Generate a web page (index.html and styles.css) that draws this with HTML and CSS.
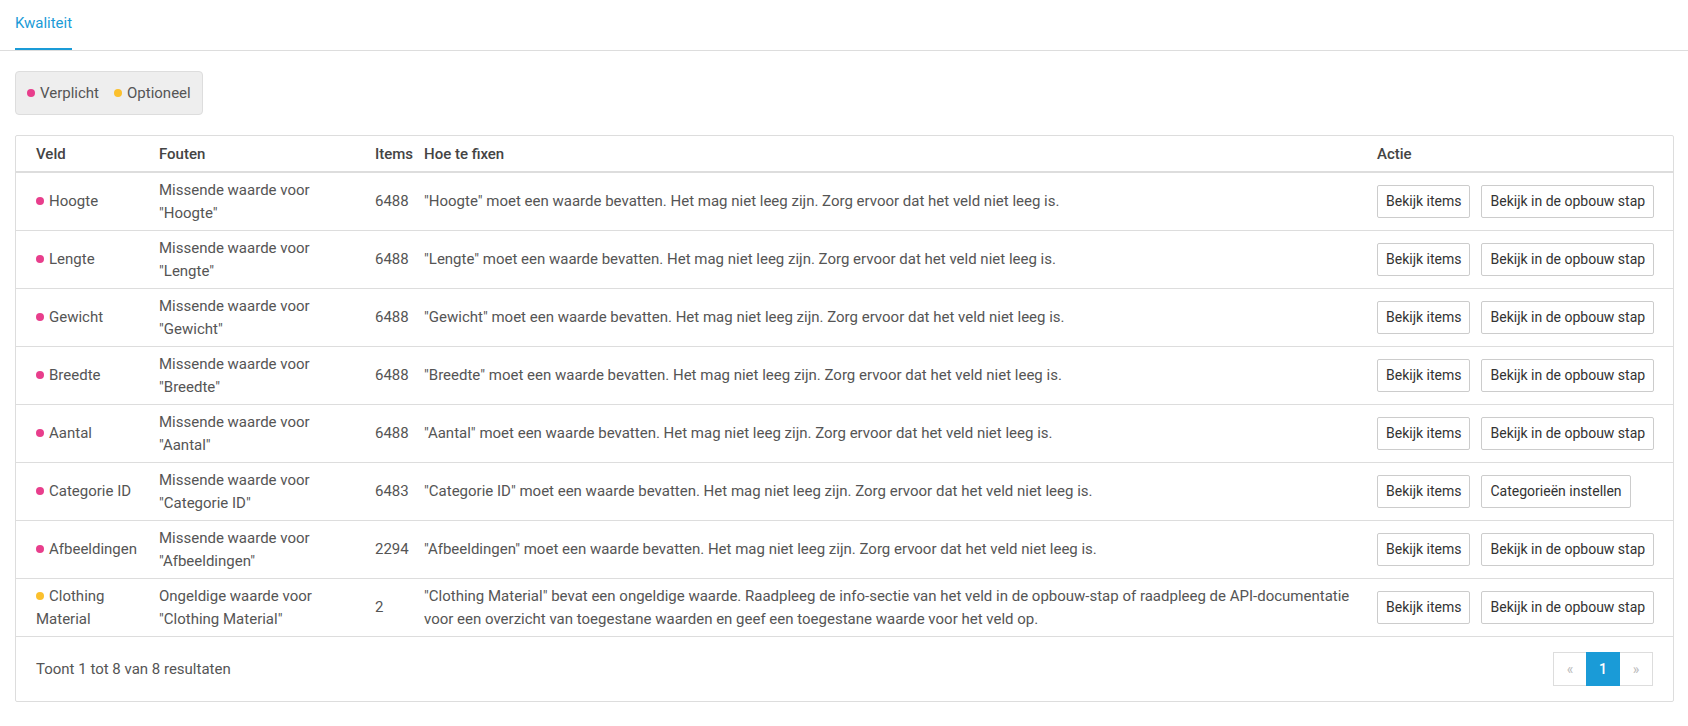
FILE: index.html
```html
<!DOCTYPE html>
<html>
<head>
  <meta charset="utf-8">
  <title>Kwaliteit</title>
  <link rel="stylesheet" href="styles.css">
</head>
<body>

<div class="tabs">
  <a class="tab active" href="#">Kwaliteit</a>
</div>

<div class="page">

  <div class="legend">
    <span class="dot required"></span>Verplicht
    <span class="dot optional second"></span>Optioneel
  </div>

  <div class="panel">
    <table class="quality">
      <colgroup>
        <col class="c-field">
        <col class="c-error">
        <col class="c-items">
        <col class="c-fix">
        <col class="c-action">
      </colgroup>
      <thead>
        <tr>
          <th>Veld</th>
          <th>Fouten</th>
          <th>Items</th>
          <th>Hoe te fixen</th>
          <th>Actie</th>
        </tr>
      </thead>
      <tbody>
        <tr>
          <td><span class="dot required"></span>Hoogte</td>
          <td class="error">Missende waarde voor "Hoogte"</td>
          <td>6488</td>
          <td>"Hoogte" moet een waarde bevatten. Het mag niet leeg zijn. Zorg ervoor dat het veld niet leeg is.</td>
          <td><div class="actions"><button>Bekijk items</button><button>Bekijk in de opbouw stap</button></div></td>
        </tr>
        <tr>
          <td><span class="dot required"></span>Lengte</td>
          <td class="error">Missende waarde voor "Lengte"</td>
          <td>6488</td>
          <td>"Lengte" moet een waarde bevatten. Het mag niet leeg zijn. Zorg ervoor dat het veld niet leeg is.</td>
          <td><div class="actions"><button>Bekijk items</button><button>Bekijk in de opbouw stap</button></div></td>
        </tr>
        <tr>
          <td><span class="dot required"></span>Gewicht</td>
          <td class="error">Missende waarde voor "Gewicht"</td>
          <td>6488</td>
          <td>"Gewicht" moet een waarde bevatten. Het mag niet leeg zijn. Zorg ervoor dat het veld niet leeg is.</td>
          <td><div class="actions"><button>Bekijk items</button><button>Bekijk in de opbouw stap</button></div></td>
        </tr>
        <tr>
          <td><span class="dot required"></span>Breedte</td>
          <td class="error">Missende waarde voor "Breedte"</td>
          <td>6488</td>
          <td>"Breedte" moet een waarde bevatten. Het mag niet leeg zijn. Zorg ervoor dat het veld niet leeg is.</td>
          <td><div class="actions"><button>Bekijk items</button><button>Bekijk in de opbouw stap</button></div></td>
        </tr>
        <tr>
          <td><span class="dot required"></span>Aantal</td>
          <td class="error">Missende waarde voor "Aantal"</td>
          <td>6488</td>
          <td>"Aantal" moet een waarde bevatten. Het mag niet leeg zijn. Zorg ervoor dat het veld niet leeg is.</td>
          <td><div class="actions"><button>Bekijk items</button><button>Bekijk in de opbouw stap</button></div></td>
        </tr>
        <tr>
          <td><span class="dot required"></span>Categorie ID</td>
          <td class="error">Missende waarde voor "Categorie ID"</td>
          <td>6483</td>
          <td>"Categorie ID" moet een waarde bevatten. Het mag niet leeg zijn. Zorg ervoor dat het veld niet leeg is.</td>
          <td><div class="actions"><button>Bekijk items</button><button>Categorieën instellen</button></div></td>
        </tr>
        <tr>
          <td><span class="dot required"></span>Afbeeldingen</td>
          <td class="error">Missende waarde voor "Afbeeldingen"</td>
          <td>2294</td>
          <td>"Afbeeldingen" moet een waarde bevatten. Het mag niet leeg zijn. Zorg ervoor dat het veld niet leeg is.</td>
          <td><div class="actions"><button>Bekijk items</button><button>Bekijk in de opbouw stap</button></div></td>
        </tr>
        <tr>
          <td><span class="dot optional"></span>Clothing Material</td>
          <td class="error">Ongeldige waarde voor "Clothing Material"</td>
          <td>2</td>
          <td>"Clothing Material" bevat een ongeldige waarde. Raadpleeg de info-sectie van het veld in de opbouw-stap of raadpleeg de API-documentatie voor een overzicht van toegestane waarden en geef een toegestane waarde voor het veld op.</td>
          <td><div class="actions"><button>Bekijk items</button><button>Bekijk in de opbouw stap</button></div></td>
        </tr>
      </tbody>
    </table>

    <div class="panel-footer">
      <span>Toont 1 tot 8 van 8 resultaten</span>
      <ul class="pager">
        <li class="disabled">&laquo;</li>
        <li class="current">1</li>
        <li class="disabled">&raquo;</li>
      </ul>
    </div>
  </div>

</div>

</body>
</html>
```

FILE: styles.css
```css
html, body {
  margin: 0;
}
body {
  background: #fff;
  color: #555;
  font-family: Roboto, "Liberation Sans", sans-serif;
  font-size: 15px;
}

/* tabs */
.tabs {
  display: flex;
  padding: 0 15px;
  border-bottom: 1px solid #ddd;
}
.tab {
  display: block;
  padding: 13px 0 15px;
  line-height: 20px;
  color: #1a9bd7;
  text-decoration: none;
  border-bottom: 2px solid transparent;
}
.tab.active {
  border-bottom-color: #1a9bd7;
}

.page {
  padding: 20px 14px 0 15px;
}

/* legend */
.legend {
  display: inline-flex;
  align-items: center;
  padding: 11px 11px;
  line-height: 20px;
  background: #eee;
  border: 1px solid #ddd;
  border-radius: 4px;
}
.dot {
  display: inline-block;
  width: 8px;
  height: 8px;
  border-radius: 50%;
  margin-right: 5px;
  vertical-align: 1px;
}
.dot.required {
  background: #e83e8c;
}
.dot.optional {
  background: #fbc02d;
}
.legend .dot.second {
  margin-left: 15px;
}

/* table panel */
.panel {
  margin-top: 20px;
  border: 1px solid #ddd;
  border-radius: 2px;
}
.quality {
  width: 100%;
  table-layout: fixed;
  border-collapse: collapse;
}
.c-field { width: 135px; }
.c-error { width: 216px; }
.c-items { width: 49px; }
.c-fix { width: 953px; }
.c-action { width: 304px; }

.quality th {
  text-align: left;
  font-weight: 500;
  color: #444;
  line-height: 20px;
  padding: 8px 8px 7px;
  border-bottom: 2px solid #ddd;
}
.quality td {
  line-height: 22.5px;
  padding: 6px 8px;
  border-bottom: 1px solid #ddd;
  vertical-align: middle;
}
.quality th:first-child,
.quality td:first-child {
  padding-left: 20px;
}
.quality td.error {
  padding-right: 24px;
}
.quality td:last-child {
  padding-right: 20px;
}

.actions {
  display: flex;
  gap: 11px;
}
.actions button {
  font-family: inherit;
  font-size: 14px;
  line-height: 19px;
  color: #333;
  background: #fff;
  border: 1px solid #ccc;
  border-radius: 2px;
  padding: 6px 8px;
  white-space: nowrap;
  cursor: pointer;
}

/* footer */
.panel-footer {
  display: flex;
  justify-content: space-between;
  align-items: center;
  padding: 15px 20px;
}
.pager {
  display: flex;
  list-style: none;
  margin: 0;
  padding: 0;
  font-size: 14px;
}
.pager li {
  width: 32px;
  height: 32px;
  line-height: 32px;
  text-align: center;
  border: 1px solid #ddd;
  margin-left: -1px;
  color: #bbb;
}
.pager li.current {
  background: #1a9bd7;
  border-color: #1a9bd7;
  color: #fff;
  font-weight: 500;
  position: relative;
}
```
